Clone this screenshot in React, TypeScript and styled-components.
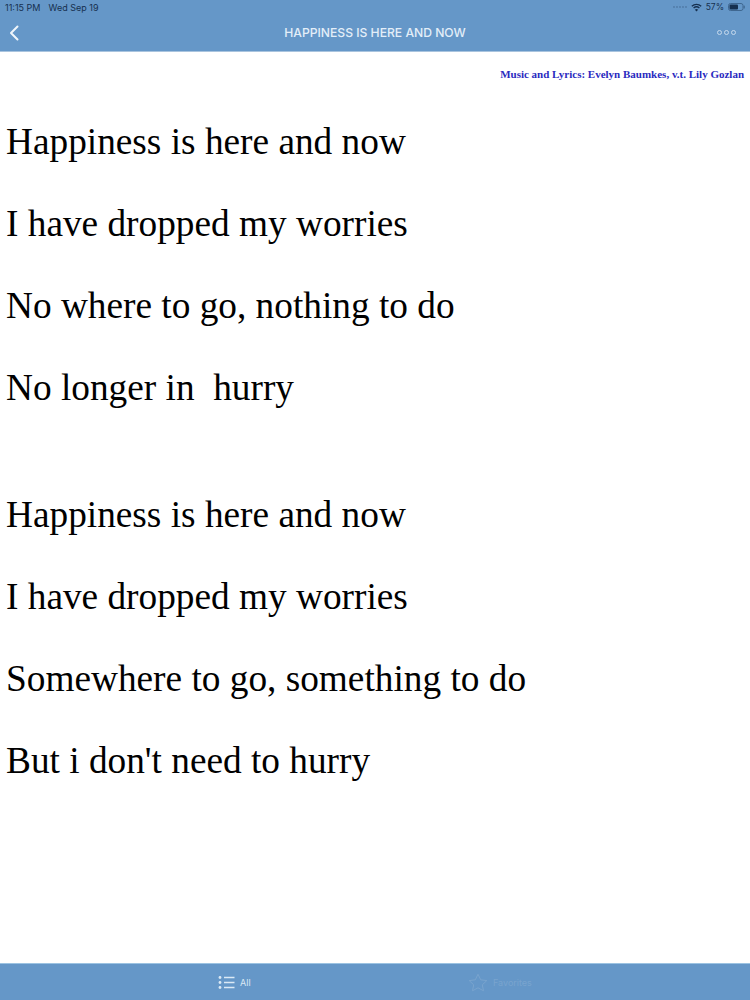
import React from "react";
import styled, { createGlobalStyle } from "styled-components";

const Global = createGlobalStyle`
  html, body { margin: 0; padding: 0; background: #fff; }
  body { width: 750px; height: 1000px; overflow: hidden; }
`;

const Page = styled.div`
  width: 750px;
  height: 1000px;
  display: flex;
  flex-direction: column;
  background: #fff;
`;

const Header = styled.header`
  height: 52px;
  flex: none;
  background: #6597c8;
  display: flex;
  flex-direction: column;
  font-family: Inter, "Liberation Sans", sans-serif;
  box-sizing: border-box;
  border-bottom: 1px solid #a9c4de;
`;

const StatusBar = styled.div`
  height: 14px;
  padding: 0 5px 0 5px;
  display: flex;
  align-items: center;
  justify-content: space-between;
  color: #16304f;
  font-size: 9px;
`;

const StatusGroup = styled.div`
  display: flex;
  align-items: center;
  gap: ${(p: { $gap: number }) => p.$gap}px;
`;

const Battery = styled.span`
  font-size: 8.5px;
`;

const NavBar = styled.div`
  flex: 1;
  display: grid;
  grid-template-columns: 60px 1fr 60px;
  align-items: center;
  padding: 0 14px 0 9px;
`;

const Title = styled.div`
  text-align: center;
  color: #e3eef8;
  font-size: 12.15px;
  font-weight: 500;
  padding-left: 5px;
`;

const MoreDots = styled.div`
  justify-self: end;
  display: flex;
  gap: 2px;
`;

const Dot = styled.span`
  width: 3px;
  height: 3px;
  border: 1px solid #c5d9ec;
  border-radius: 50%;
`;

const Content = styled.main`
  flex: 1;
  display: flex;
  flex-direction: column;
`;

const Credit = styled.div`
  font-family: "Liberation Serif", serif;
  font-weight: 700;
  font-size: 11px;
  line-height: 14px;
  color: #2a2ac0;
  text-align: right;
  padding: 15px 6px 0 0;
`;

const Verse = styled.div`
  display: flex;
  flex-direction: column;
  padding-left: 6px;
  margin-top: ${(p: { $top: number }) => p.$top}px;
`;

const Line = styled.div`
  font-family: "Liberation Serif", serif;
  font-size: 37.3px;
  line-height: 82px;
  color: #000;
  white-space: pre;
`;

const TabBar = styled.footer`
  height: 37px;
  flex: none;
  background: #6597c8;
  border-top: 1px solid #9cc3e2;
  box-sizing: border-box;
  display: flex;
  align-items: center;
  font-family: Inter, "Liberation Sans", sans-serif;
  font-size: 9px;
  padding: 0 0 0 218px;
`;

const Tab = styled.div<{ $active?: boolean; $width?: number }>`
  display: flex;
  align-items: center;
  gap: 5px;
  width: ${(p) => p.$width}px;
  color: ${(p) => (p.$active ? "#dbe9f5" : "#79a4ce")};
`;

const verse1 = ["Happiness is here and now", "I have dropped my worries", "No where to go, nothing to do", "No longer in  hurry"];
const verse2 = ["Happiness is here and now", "I have dropped my worries", "Somewhere to go, something to do", "But i don't need to hurry"];

export default function App() {
  return (
    <Page>
      <Global />
      <Header>
        <StatusBar>
          <StatusGroup $gap={8}>
            <span>11:15 PM</span>
            <span>Wed Sep 19</span>
          </StatusGroup>
          <StatusGroup $gap={4}>
            <svg width="14" height="4" viewBox="0 0 14 4">
              {[1, 4, 7, 10, 13].map((x) => (
                <circle key={x} cx={x} cy="2" r="0.9" fill="#4f7aa6" />
              ))}
            </svg>
            <svg width="11" height="9" viewBox="0 0 11 9" fill="none" stroke="#16304f">
              <path d="M0.8 3.2a7 7 0 0 1 9.4 0" strokeWidth="1.3" />
              <path d="M2.6 5a4.4 4.4 0 0 1 5.8 0" strokeWidth="1.3" />
              <path d="M5.5 8.6 3.9 6.7a2.3 2.3 0 0 1 3.2 0z" fill="#16304f" stroke="none" />
            </svg>
            <Battery>57%</Battery>
            <svg width="17" height="8" viewBox="0 0 17 8">
              <rect x="0.5" y="0.5" width="14.5" height="7" rx="2" fill="none" stroke="#3f6790" />
              <rect x="1.5" y="1.5" width="8.5" height="5" rx="1" fill="#16304f" />
              <rect x="15.6" y="2.5" width="1.2" height="3" rx="0.6" fill="#3f6790" />
            </svg>
          </StatusGroup>
        </StatusBar>
        <NavBar>
          <svg width="11" height="16" viewBox="0 0 11 16" fill="none" stroke="#f0f6fb" strokeWidth="2" strokeLinecap="round" strokeLinejoin="round">
            <path d="M8.5 1.5 2 8l6.5 6.5" />
          </svg>
          <Title>HAPPINESS IS HERE AND NOW</Title>
          <MoreDots>
            <Dot />
            <Dot />
            <Dot />
          </MoreDots>
        </NavBar>
      </Header>
      <Content>
        <Credit>Music and Lyrics: Evelyn Baumkes, v.t. Lily Gozlan</Credit>
        <Verse $top={20}>
          {verse1.map((l, i) => (
            <Line key={i}>{l}</Line>
          ))}
        </Verse>
        <Verse $top={45}>
          {verse2.map((l, i) => (
            <Line key={i}>{l}</Line>
          ))}
        </Verse>
      </Content>
      <TabBar>
        <Tab $active $width={250}>
          <svg width="17" height="15" viewBox="0 0 17 15" fill="none" stroke="#dbe9f5" strokeWidth="1.3">
            <circle cx="2" cy="2.5" r="1.4" fill="#dbe9f5" stroke="none" />
            <circle cx="2" cy="7.5" r="1.4" fill="#dbe9f5" stroke="none" />
            <circle cx="2" cy="12.5" r="1.4" fill="#dbe9f5" stroke="none" />
            <path d="M6 2.5h10.5M6 7.5h10.5M6 12.5h10.5" />
          </svg>
          <span>All</span>
        </Tab>
        <Tab>
          <svg width="20" height="19" viewBox="0 0 20 19" fill="none" stroke="#79a4ce" strokeWidth="1" strokeLinejoin="round">
            <path d="M10 1.2l2.7 5.6 6.1.8-4.5 4.2 1.2 6-5.5-3-5.5 3 1.2-6L1.2 7.6l6.1-.8z" />
          </svg>
          <span>Favorites</span>
        </Tab>
      </TabBar>
    </Page>
  );
}
